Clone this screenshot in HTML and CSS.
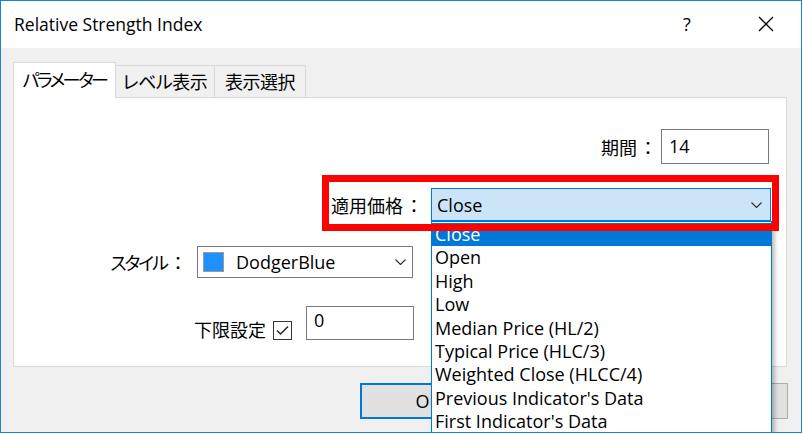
FILE: index.html
```html
<!DOCTYPE html>
<html lang="ja">
<head>
    <meta charset="UTF-8">
    <title>Relative Strength Index</title>
    <link rel="stylesheet" href="styles.css">
</head>
<body>
    <div class="window">
        <div class="titlebar">
            <span class="title">Relative Strength Index</span>
            <span class="help">?</span>
            <span class="close">
                <svg width="16" height="16" viewBox="0 0 16 16"><path d="M1 1 L15 15 M15 1 L1 15" stroke="#000" stroke-width="1.3" fill="none"/></svg>
            </span>
        </div>

        <div class="client">
            <div class="tabs">
                <div class="tab active kana">パラメーター</div>
                <div class="tab tab-2">レベル表示</div>
                <div class="tab tab-3">表示選択</div>
            </div>

            <div class="panel">
                <div class="row row-period">
                    <label class="jp">期間<span class="colon">：</span></label>
                    <div class="edit edit-period">14</div>
                </div>

                <div class="row row-price">
                    <label class="jp">適用価格<span class="colon">：</span></label>
                    <div class="combo combo-price">
                        <span>Close</span>
                        <svg class="chevron" width="11" height="6" viewBox="0 0 11 6"><path d="M0.5 0.5 L5.5 5.5 L10.5 0.5" stroke="#333" stroke-width="1.2" fill="none"/></svg>
                    </div>
                </div>

                <div class="row row-style">
                    <label class="jp"><span class="kana">スタイル</span><span class="colon">：</span></label>
                    <div class="combo combo-style">
                        <span class="swatch"></span>
                        <span>DodgerBlue</span>
                        <svg class="chevron" width="11" height="6" viewBox="0 0 11 6"><path d="M0.5 0.5 L5.5 5.5 L10.5 0.5" stroke="#333" stroke-width="1.2" fill="none"/></svg>
                    </div>
                </div>

                <div class="row row-limit">
                    <label class="jp">下限設定</label>
                    <span class="checkbox">
                        <svg width="19" height="19" viewBox="0 0 19 19"><rect x="0.5" y="0.5" width="18" height="18" fill="#fff" stroke="#333"/><path d="M4 9.5 L7.5 13 L15 5.5" stroke="#222" stroke-width="1.4" fill="none"/></svg>
                    </span>
                    <div class="edit edit-limit">0</div>
                </div>
            </div>

            <!-- only the first button peeks out from under the open list -->
            <div class="buttons">
                <button class="btn default">OK</button>
                <button class="btn"></button>
                <button class="btn"></button>
            </div>
        </div>

        <!-- open list of the price combo -->
        <ul class="droplist">
            <li class="selected">Close</li>
            <li>Open</li>
            <li>High</li>
            <li>Low</li>
            <li>Median Price (HL/2)</li>
            <li>Typical Price (HLC/3)</li>
            <li>Weighted Close (HLCC/4)</li>
            <li>Previous Indicator's Data</li>
            <li>First Indicator's Data</li>
        </ul>

        <div class="highlight"></div>
    </div>
</body>
</html>
```

FILE: styles.css
```css
body {
    margin: 0;
    background-color: #fff;
    font-family: "Open Sans", "Noto Sans CJK JP", sans-serif;
    font-size: 18px;
    color: #000;
}

.window {
    position: relative;
    width: 802px;
    height: 433px;
    box-sizing: border-box;
    border: 1px solid #1883d7;
    background-color: #f0f0f0;
    overflow: hidden;
}

.titlebar {
    height: 47px;
    background-color: #fff;
    display: flex;
    align-items: center;
    padding-left: 13px;
}

.title {
    flex: 1;
    margin-top: -1px;
    font-size: 17.5px;
}

.help {
    width: 20px;
    margin-right: 55px;
    font-size: 18px;
    margin-top: -2px;
}

.close {
    display: flex;
    margin-right: 27px;
    margin-top: -2px;
}

.client {
    padding: 13px 12px 0 12px;
}

.jp {
    font-family: "Noto Sans CJK JP", sans-serif;
    font-feature-settings: "palt";
    font-size: 18px;
}

.colon {
    font-feature-settings: normal;
    margin-left: 2px;
}

.kana {
    letter-spacing: -2px;
}

/* tabs */
.tabs {
    display: flex;
    align-items: flex-end;
    height: 36px;
    font-family: "Noto Sans CJK JP", sans-serif;
    font-feature-settings: "palt";
    font-size: 18px;
}

.tab {
    box-sizing: border-box;
    height: 32px;
    border: 1px solid #d9d9d9;
    border-bottom: none;
    border-left: none;
    display: flex;
    align-items: center;
    justify-content: center;
    padding-bottom: 1px;
    letter-spacing: -0.5px;
}

.tab.kana {
    letter-spacing: -2.5px;
}

.tab.active {
    width: 103px;
    height: 36px;
    margin-bottom: -1px;
    border-left: 1px solid #d9d9d9;
    background-color: #fff;
    position: relative;
    z-index: 1;
    padding-bottom: 3px;
}

.tab-2 {
    width: 99px;
}

.tab-3 {
    width: 91px;
}

.panel {
    box-sizing: border-box;
    width: 774px;
    height: 270px;
    border: 1px solid #d9d9d9;
    background-color: #fff;
}

.row {
    display: flex;
    align-items: center;
}

.row-period {
    justify-content: flex-end;
    margin-top: 31px;
    padding-right: 17px;
}

.row-price {
    justify-content: flex-end;
    margin-top: 24px;
    padding-right: 15px;
}

.row-style {
    justify-content: flex-end;
    width: 399px;
    margin-top: 25px;
}

.row-limit {
    justify-content: flex-end;
    width: 400px;
    margin-top: 26px;
}

.edit {
    box-sizing: border-box;
    width: 108px;
    border: 1px solid #7a7a7a;
    background-color: #fff;
    padding-left: 7px;
}

.edit-period {
    height: 35px;
    line-height: 33px;
    margin-left: 4px;
}

.edit-limit {
    height: 34px;
    line-height: 26px;
    margin-left: 14px;
}

.combo {
    box-sizing: border-box;
    display: flex;
    align-items: center;
    border: 1px solid #7a7a7a;
    background-color: #fff;
}

.combo .chevron {
    margin-left: auto;
}

.combo-price {
    width: 340px;
    height: 33px;
    margin-left: 8px;
    padding: 0 8px 0 5px;
    border-color: #0078d7;
    background-color: #cce4f7;
}

.combo-style {
    width: 216px;
    height: 32px;
    margin-left: 10px;
    padding: 0 6px 0 5px;
}

.swatch {
    width: 19px;
    height: 18px;
    border: 1px solid #9a9a9a;
    background-color: #1e90ff;
    margin-right: 12px;
}

.checkbox {
    display: flex;
    margin-left: 7px;
    margin-top: 14px;
}

.row-limit label {
    margin-top: 12px;
}

/* bottom buttons */
.buttons {
    display: flex;
    justify-content: flex-end;
    gap: 10px;
    margin-top: 16px;
    padding-right: 1px;
}

.btn {
    width: 136px;
    height: 36px;
    border: 1px solid #adadad;
    background-color: #e1e1e1;
    font-family: "Open Sans", "Noto Sans CJK JP", sans-serif;
    font-size: 18px;
}

.btn.default {
    border: 2px solid #0078d7;
}

/* the open list and the red mark sit over the dialog */
.droplist {
    position: absolute;
    left: 430px;
    top: 220px;
    width: 341px;
    height: 240px;
    box-sizing: border-box;
    margin: 0;
    padding: 1px 0 0 0;
    list-style: none;
    border: 1px solid #0078d7;
    background-color: #fff;
    box-shadow: 3px 3px 4px rgba(0, 0, 0, 0.25);
    z-index: 2;
}

.droplist li {
    height: 23.4px;
    line-height: 23.4px;
    padding-left: 3px;
    white-space: nowrap;
}

.droplist li.selected {
    background-color: #0078d7;
    color: #fff;
}

.highlight {
    position: absolute;
    left: 321px;
    top: 174px;
    width: 457px;
    height: 56px;
    box-sizing: border-box;
    border: 7px solid #ff0000;
    z-index: 3;
}
```
